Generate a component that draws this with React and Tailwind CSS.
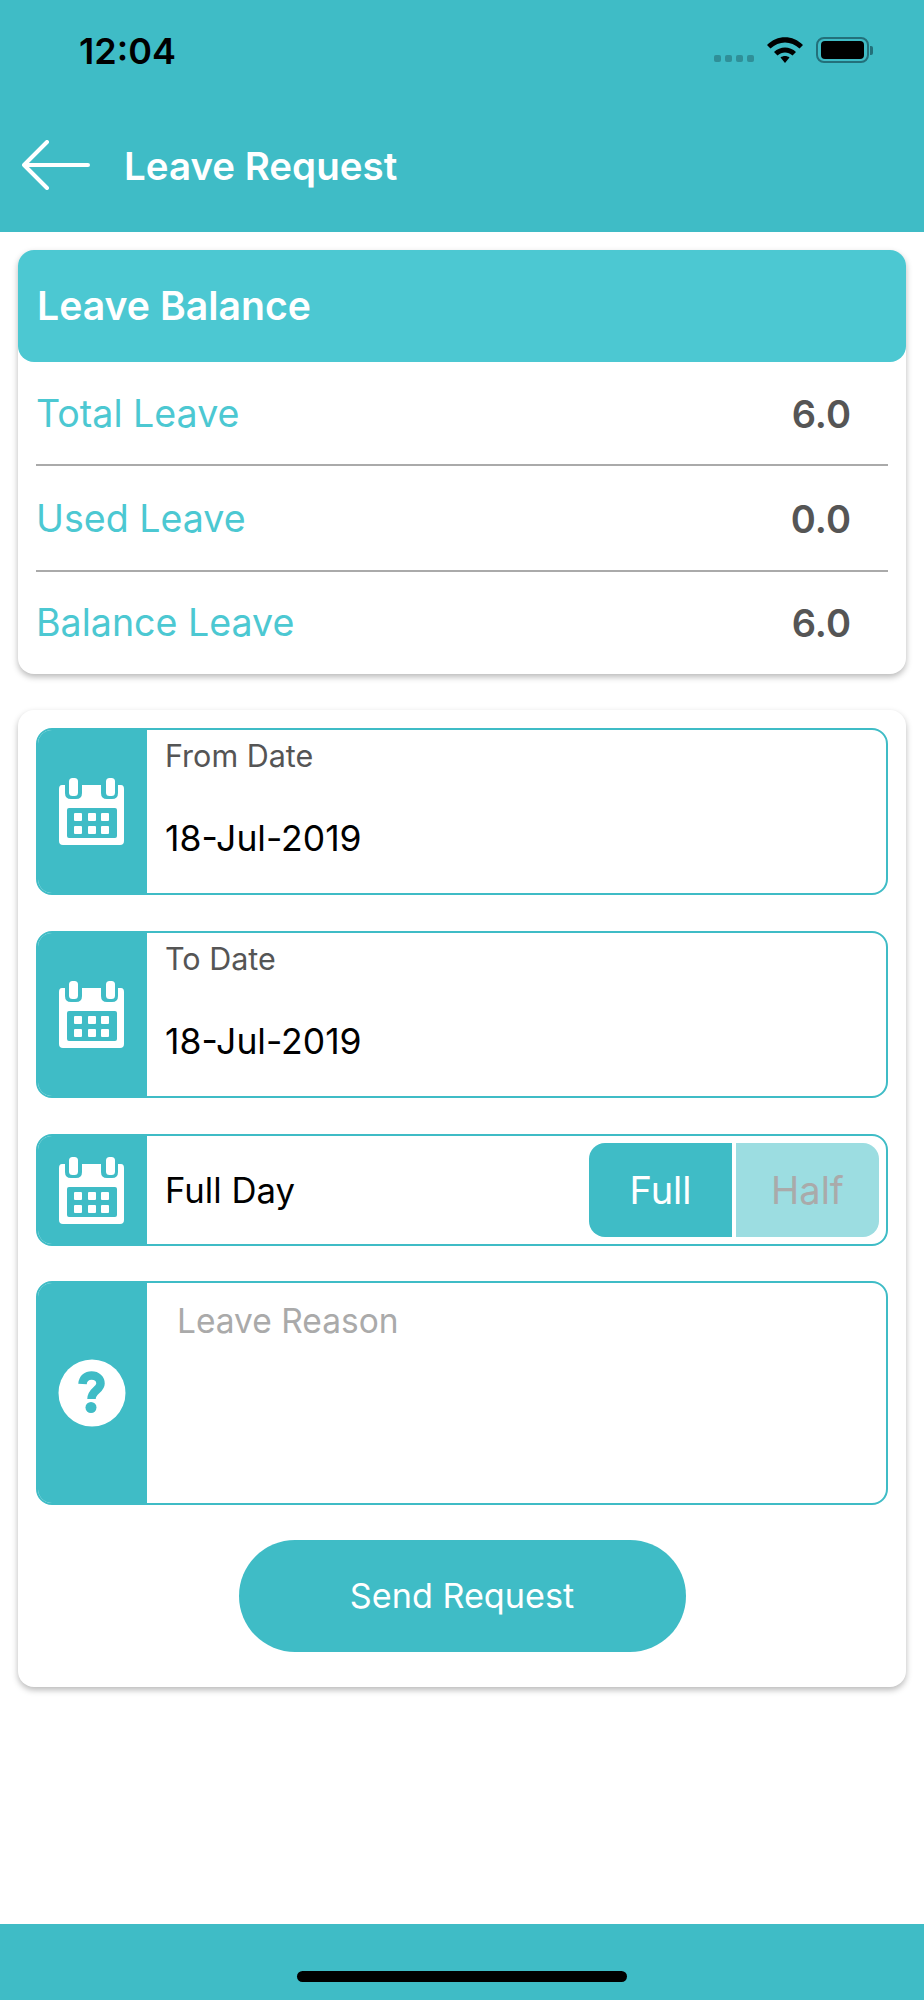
import React from 'react';

const CalendarIcon = () => (
  <svg width="65" height="67" viewBox="0 0 65 67" fill="none">
    <path
      fillRule="evenodd"
      d="M3 7H6V15Q6 21 12 21H17Q23 21 23 15V7H42V15Q42 21 48 21H53Q59 21 59 15V7H62Q65 7 65 11V63Q65 67 61 67H4Q0 67 0 63V11Q0 7 3 7ZM10 30Q8 30 8 32V58Q8 60 10 60H56Q58 60 58 58V32Q58 30 56 30Z"
      fill="white"
    />
    <rect x="10" y="0" width="9" height="18" rx="3.5" fill="white" />
    <rect x="47" y="0" width="9" height="18" rx="3.5" fill="white" />
    <rect x="15" y="35" width="8" height="8" rx="1" fill="white" />
    <rect x="29" y="35" width="8" height="8" rx="1" fill="white" />
    <rect x="42" y="35" width="8" height="8" rx="1" fill="white" />
    <rect x="15" y="48" width="8" height="8" rx="1" fill="white" />
    <rect x="29" y="48" width="8" height="8" rx="1" fill="white" />
    <rect x="42" y="48" width="8" height="8" rx="1" fill="white" />
  </svg>
);

const QuestionIcon = () => (
  <svg width="68" height="68" viewBox="0 0 68 68" fill="none">
    <circle cx="34" cy="34" r="33.5" fill="white" />
    <path
      d="M24.5 25C25 19 29 16.5 33.5 16.5C39 16.5 42.5 20 42.5 24.5C42.5 31 33.5 31.5 33.5 40"
      stroke="#3fbcc6"
      strokeWidth="8.5"
    />
    <circle cx="33" cy="48.5" r="5.5" fill="#3fbcc6" />
  </svg>
);

const BalanceRow = ({ label, value, className }) => (
  <div className={`flex items-center justify-between pr-[37px] ${className}`}>
    <span className="text-[37.6px] text-[#4cc8d2]">{label}</span>
    <span className="text-[38px] font-semibold text-[#555555]">{value}</span>
  </div>
);

const IconField = ({ className, icon, children }) => (
  <div className={`flex overflow-hidden rounded-[16px] border-2 border-[#3fbcc6] ${className}`}>
    <div className="flex w-[109px] shrink-0 items-center justify-center bg-[#3fbcc6] pr-[2px]">{icon}</div>
    {children}
  </div>
);

const DateField = ({ label, value }) => (
  <IconField className="h-[167px]" icon={<CalendarIcon />}>
    <div className="pl-[18px]">
      <div className="mt-[8px] text-[30.5px] leading-[36px] text-[#555555]">{label}</div>
      <div className="mt-[44px] text-[35.5px] leading-[42px] text-black">{value}</div>
    </div>
  </IconField>
);

const App = () => (
  <div
    className="flex h-[2000px] w-[924px] flex-col bg-white"
    style={{ fontFamily: 'Inter, "Noto Sans", sans-serif' }}
  >
    <header className="h-[232px] shrink-0 bg-[#3fbcc6]">
      <div className="flex h-[102px] items-start justify-between pt-[28px] pl-[79px] pr-[51px]">
        <span className="text-[36px] leading-[46px] font-semibold text-black">12:04</span>
        <div className="flex items-start pt-[9px]">
          <div className="mt-[18px] flex gap-[4px]">
            <span className="h-[7px] w-[7px] rounded-[2px] bg-[#2f8f98]" />
            <span className="h-[7px] w-[7px] rounded-[2px] bg-[#2f8f98]" />
            <span className="h-[7px] w-[7px] rounded-[2px] bg-[#2f8f98]" />
            <span className="h-[7px] w-[7px] rounded-[2px] bg-[#2f8f98]" />
          </div>
          <svg className="ml-[13px]" width="36" height="26" viewBox="0 0 36 26" fill="black">
            <path d="M0 8C10 -2.5 26 -2.5 36 8L32.5 11.5C24 3.5 12 3.5 3.5 11.5Z" />
            <path d="M7 15C13 9 23 9 29 15L25.5 18.5C21 14.5 15 14.5 10.5 18.5Z" />
            <path d="M13.5 20.5C16 18.5 20 18.5 22.5 20.5L18 26Z" />
          </svg>
          <div className="ml-[13px] flex items-center">
            <div className="flex h-[26px] w-[53px] items-center justify-center rounded-[8px] border-2 border-[#23707a]">
              <div className="h-[18px] w-[43px] rounded-[4px] bg-black" />
            </div>
            <div className="ml-[1px] h-[9px] w-[3px] rounded-r-[2px] bg-[#23707a]" />
          </div>
        </div>
      </div>
      <div className="flex h-[130px] items-start">
        <svg className="ml-[22px] mt-[38px]" width="68" height="50" viewBox="0 0 68 50" fill="none">
          <path
            d="M2 25H66M25 2L2 25L25 48"
            stroke="white"
            strokeWidth="4"
            strokeLinecap="round"
            strokeLinejoin="round"
          />
        </svg>
        <h1 className="ml-[34px] mt-[42px] text-[38.5px] leading-[44px] font-semibold text-white">Leave Request</h1>
      </div>
    </header>

    <main className="flex-1 px-[18px] pt-[18px]">
      <section className="h-[424px] rounded-[16px] bg-white shadow-[0_3px_6px_rgba(0,0,0,0.28)]">
        <div className="flex h-[112px] items-center rounded-[16px] bg-[#4cc8d2] pl-[19px] text-[39.2px] font-semibold text-white">
          Leave Balance
        </div>
        <div className="px-[18px]">
          <BalanceRow label="Total Leave" value="6.0" className="h-[102px] pt-[2px]" />
          <div className="h-[2px] bg-[#aaaaaa]" />
          <BalanceRow label="Used Leave" value="0.0" className="h-[104px] pt-[2px]" />
          <div className="h-[2px] bg-[#aaaaaa]" />
          <BalanceRow label="Balance Leave" value="6.0" className="h-[102px] pt-[1px]" />
        </div>
      </section>

      <section className="mt-[36px] flex h-[977px] flex-col rounded-[16px] bg-white px-[18px] pt-[18px] shadow-[0_3px_6px_rgba(0,0,0,0.28)]">
        <DateField label="From Date" value="18-Jul-2019" />
        <div className="mt-[36px]">
          <DateField label="To Date" value="18-Jul-2019" />
        </div>

        <IconField className="mt-[36px] h-[112px]" icon={<CalendarIcon />}>
          <div className="flex flex-1 items-center justify-between pl-[18px] pr-[7px]">
            <span className="text-[34.7px] text-black">Full Day</span>
            <div className="flex h-[94px] text-[38px]">
              <div className="flex w-[143px] items-center justify-center rounded-l-[16px] bg-[#3fbcc6] text-white">Full</div>
              <div className="ml-[4px] flex w-[143px] items-center justify-center rounded-r-[16px] bg-[#9cdde1] text-[#aaaaaa]">Half</div>
            </div>
          </div>
        </IconField>

        <IconField className="mt-[35px] h-[224px]" icon={<QuestionIcon />}>
          <div className="pl-[30px] pt-[18px] text-[33.5px] leading-[40px] text-[#aaaaaa]">Leave Reason</div>
        </IconField>

        <button className="mx-auto mt-[35px] flex h-[112px] w-[447px] items-center justify-center rounded-full bg-[#3fbcc6] text-[34.2px] text-white">
          Send Request
        </button>
      </section>
    </main>

    <footer className="flex h-[76px] shrink-0 justify-center bg-[#3fbcc6] pt-[47px]">
      <div className="h-[11px] w-[330px] rounded-full bg-black" />
    </footer>
  </div>
);

export default App;
